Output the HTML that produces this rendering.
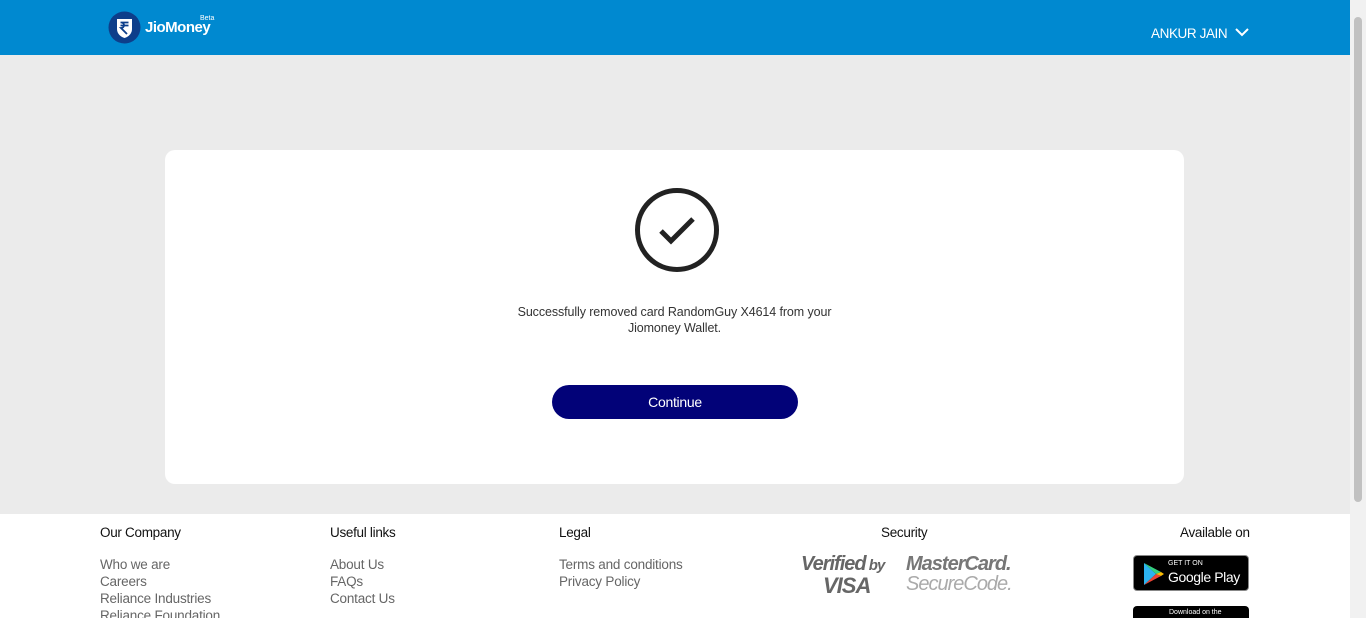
<!DOCTYPE html>
<html><head><meta charset="utf-8"><style>
*{margin:0;padding:0;box-sizing:border-box}
html,body{width:1366px;height:618px;overflow:hidden}
body{font-family:"Liberation Sans",sans-serif;background:#ebebeb;position:relative}
.hdr{position:absolute;left:0;top:0;width:1350px;height:55px;background:#0089d0}
.sb{position:absolute;right:0;top:0;width:16px;height:618px;background:#f1f1f1}
.sb div{position:absolute;left:4px;top:17px;width:8px;height:485px;background:#c1c1c1;border-radius:4px}
.card{position:absolute;left:165px;top:150px;width:1019px;height:334px;background:#fff;border-radius:10px}
.ft{position:absolute;left:0;top:514px;width:1350px;height:104px;background:#fff;overflow:hidden}
.h{position:absolute;font-size:13.5px;color:#111;top:11px;letter-spacing:-0.3px}
.l{position:absolute;font-size:13.5px;color:#666;top:42px;line-height:17px;letter-spacing:-0.2px}
</style></head><body>
<div class="hdr">
<svg style="position:absolute;left:108px;top:11px" width="33" height="33" viewBox="0 0 33 33"><circle cx="16.5" cy="16.5" r="16" fill="#0d3e8a"/><path d="M9 8h15v10c0 5-4 8-7.5 9C13 26 9 23 9 18z" fill="#fff"/><path d="M12.5 11.5h8M12.5 14.5h8M13 11.5c4 0 4 5.5 0 5.5l6 6" stroke="#0d3e8a" stroke-width="1.8" fill="none"/></svg>
<div style="position:absolute;left:145px;top:19px;color:#fff;font-weight:bold;font-size:15px;letter-spacing:-0.5px">JioMoney</div>
<div style="position:absolute;left:200px;top:15px;color:#fff;font-size:7px">Beta</div>
<div style="position:absolute;left:1151px;top:26px;color:#fff;font-size:13.5px;letter-spacing:-0.4px">ANKUR JAIN</div>
<svg style="position:absolute;left:1235px;top:27px" width="14" height="10"><path d="M1 2l6 6 6-6" stroke="#fff" stroke-width="2" fill="none"/></svg>
</div>
<div class="card">
<svg style="position:absolute;left:469px;top:37px" width="86" height="86"><circle cx="43" cy="43" r="39.5" stroke="#222" stroke-width="5" fill="none"/><path d="M27 44l10 10 22-22" stroke="#222" stroke-width="5" fill="none"/></svg>
<div style="position:absolute;left:0;width:1019px;top:154px;text-align:center;font-size:12.5px;color:#333;line-height:16px;letter-spacing:-0.1px">Successfully removed card RandomGuy X4614 from your<br>Jiomoney Wallet.</div>
<div style="position:absolute;left:387px;top:235px;width:246px;height:34px;border-radius:17px;background:#020278;color:#fff;font-size:14px;text-align:center;line-height:34px;letter-spacing:-0.3px">Continue</div>
</div>
<div class="ft">
<div class="h" style="left:100px">Our Company</div>
<div class="l" style="left:100px">Who we are<br>Careers<br>Reliance Industries<br>Reliance Foundation</div>
<div class="h" style="left:330px">Useful links</div>
<div class="l" style="left:330px">About Us<br>FAQs<br>Contact Us</div>
<div class="h" style="left:559px">Legal</div>
<div class="l" style="left:559px">Terms and conditions<br>Privacy Policy</div>
<div class="h" style="left:881px">Security</div>
<div style="position:absolute;left:801px;top:40px;color:#666;font-weight:bold;font-style:italic;font-size:20px;line-height:20px;letter-spacing:-1px">Verified<span style="font-size:15px"> by</span><br><span style="margin-left:22px;font-size:22px">VISA</span></div>
<div style="position:absolute;left:906px;top:40px;color:#777;font-weight:bold;font-style:italic;font-size:20px;line-height:20px;letter-spacing:-1px">MasterCard.<br><span style="font-weight:normal;color:#aaa">SecureCode.</span></div>
<div class="h" style="left:1180px">Available on</div>
<div style="position:absolute;left:1133px;top:41px;width:116px;height:36px;background:#000;border-radius:4px;border:1px solid #888">
<svg style="position:absolute;left:9px;top:6px" width="22" height="24"><path d="M1 1l12 11L1 23z" fill="#2cb3f0"/><path d="M1 1l17 9-5 2z" fill="#35d07f"/><path d="M1 23l17-9-5-2z" fill="#ea4335"/><path d="M18 10l3 2-3 2-5-2z" fill="#fbbc04"/></svg>
<div style="position:absolute;left:34px;top:4px;color:#fff;font-size:7px">GET IT ON</div>
<div style="position:absolute;left:34px;top:13px;color:#fff;font-size:14px;letter-spacing:-0.4px">Google Play</div></div>
<div style="position:absolute;left:1133px;top:92px;width:116px;height:20px;background:#000;border-radius:4px"><div style="position:absolute;left:36px;top:3px;color:#fff;font-size:7px">Download on the</div></div>
</div>
<div class="sb"><div></div></div>
</body></html>
